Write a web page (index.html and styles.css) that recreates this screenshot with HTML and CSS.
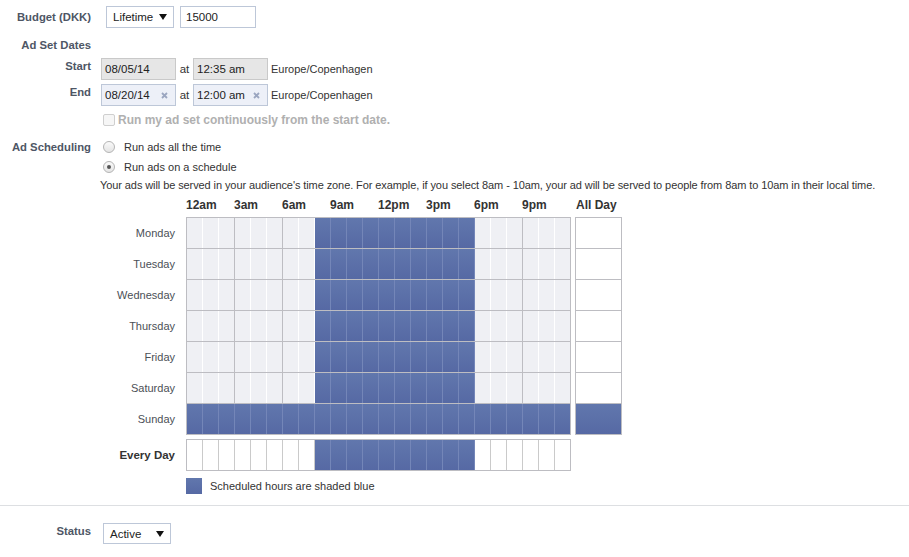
FILE: index.html
```html
<!DOCTYPE html>
<html lang="en">
<head>
    <meta charset="UTF-8">
    <title>Ad Set Budget &amp; Schedule</title>
    <link rel="stylesheet" href="styles.css">
</head>
<body>
    <div class="form">
        <div class="row budget">
            <div class="label">Budget (DKK)</div>
            <div class="field">
                <div class="select lifetime">Lifetime <span class="arrow"></span></div>
                <div class="input amount">15000</div>
            </div>
        </div>

        <div class="row heading">
            <div class="label">Ad Set Dates</div>
        </div>

        <div class="row dates start">
            <div class="label">Start</div>
            <div class="field">
                <div class="input date locked">08/05/14</div>
                <span class="at">at</span>
                <div class="input date locked">12:35 am</div>
                <span class="tz">Europe/Copenhagen</span>
            </div>
        </div>
        <div class="row dates end">
            <div class="label">End</div>
            <div class="field">
                <div class="input date editable">08/20/14
                    <svg class="clear" width="7" height="7" viewBox="0 0 7 7"><path d="M1 1L6 6M6 1L1 6" stroke="#9ba6c0" stroke-width="1.8"/></svg>
                </div>
                <span class="at">at</span>
                <div class="input date editable">12:00 am
                    <svg class="clear" width="7" height="7" viewBox="0 0 7 7"><path d="M1 1L6 6M6 1L1 6" stroke="#9ba6c0" stroke-width="1.8"/></svg>
                </div>
                <span class="tz">Europe/Copenhagen</span>
            </div>
        </div>

        <div class="row continuous">
            <div class="label"></div>
            <div class="field">
                <span class="checkbox"></span>
                <span class="disabled-text">Run my ad set continuously from the start date.</span>
            </div>
        </div>

        <div class="row scheduling">
            <div class="label">Ad Scheduling</div>
            <div class="field">
                <div class="option"><span class="radio"></span>Run ads all the time</div>
                <div class="option"><span class="radio checked"></span>Run ads on a schedule</div>
                <p class="note">Your ads will be served in your audience's time zone. For example, if you select 8am - 10am, your ad will be served to people from 8am to 10am in their local time.</p>

                <div class="schedule">
                    <div class="hour-head">
                        <span>12am</span><span>3am</span><span>6am</span><span>9am</span>
                        <span>12pm</span><span>3pm</span><span>6pm</span><span>9pm</span>
                        <span class="allday-head">All Day</span>
                    </div>
                    <div class="week">
                        <div class="sched-row"><div class="day">Monday</div><div class="hours" data-from="8" data-to="18"></div><div class="allday"></div></div>
                        <div class="sched-row"><div class="day">Tuesday</div><div class="hours" data-from="8" data-to="18"></div><div class="allday"></div></div>
                        <div class="sched-row"><div class="day">Wednesday</div><div class="hours" data-from="8" data-to="18"></div><div class="allday"></div></div>
                        <div class="sched-row"><div class="day">Thursday</div><div class="hours" data-from="8" data-to="18"></div><div class="allday"></div></div>
                        <div class="sched-row"><div class="day">Friday</div><div class="hours" data-from="8" data-to="18"></div><div class="allday"></div></div>
                        <div class="sched-row"><div class="day">Saturday</div><div class="hours" data-from="8" data-to="18"></div><div class="allday"></div></div>
                        <div class="sched-row last"><div class="day">Sunday</div><div class="hours" data-from="0" data-to="24"></div><div class="allday on"></div></div>
                    </div>
                    <div class="sched-row every">
                        <div class="day">Every Day</div>
                        <div class="hours" data-from="8" data-to="18"></div>
                    </div>
                    <div class="legend"><span class="swatch"></span>Scheduled hours are shaded blue</div>
                </div>
            </div>
        </div>

        <div class="divider"></div>

        <div class="row status">
            <div class="label">Status</div>
            <div class="field">
                <div class="select active">Active <span class="arrow"></span></div>
            </div>
        </div>
    </div>

    <script>
        // 生成每一行的 24 个小时格子
        document.querySelectorAll('.hours').forEach(function(h) {
            var from = parseInt(h.dataset.from, 10);
            var to = parseInt(h.dataset.to, 10);
            for (var i = 0; i < 24; i++) {
                var cell = document.createElement('div');
                var cls = 'cell';
                if (i % 3 === 2) cls += ' edge';
                if (i >= from && i < to) cls += ' on';
                cell.className = cls;
                h.appendChild(cell);
            }
        });
    </script>
</body>
</html>
```

FILE: styles.css
```css
body {
    margin: 0;
    font-family: 'Liberation Sans', Arial, sans-serif;
    font-size: 11px;
    color: #333;
    background: #fff;
}
.row {
    display: flex;
}
.label {
    width: 91px;
    flex-shrink: 0;
    text-align: right;
    font-weight: bold;
    font-size: 11.3px;
    color: #4e5665;
    line-height: 14px;
}
.field {
    margin-left: 9px;
    display: flex;
    align-items: center;
}

/* budget */
.budget {
    margin-top: 6px;
    align-items: center;
}
.select, .input {
    box-sizing: border-box;
    border: 1px solid #bdc7d8;
    background: #fff;
    display: flex;
    align-items: center;
    color: #222;
}
.select {
    position: relative;
    padding-left: 6px;
}
.arrow {
    position: absolute;
    right: 6px;
    top: 7px;
    width: 0;
    height: 0;
    border-left: 4px solid transparent;
    border-right: 4px solid transparent;
    border-top: 6px solid #111;
}
.lifetime {
    margin-left: 6px;
    width: 68px;
    height: 22px;
    font-size: 11.5px;
}
.amount {
    margin-left: 6px;
    width: 76px;
    height: 22px;
    padding-left: 5px;
    font-size: 11.5px;
}

/* dates */
.heading {
    margin-top: 10px;
}
.start {
    margin-top: 6px;
}
.end {
    margin-top: 4px;
}
.dates {
    align-items: flex-start;
}
.dates .label {
    padding-top: 1px;
}
.dates .field {
    margin-left: 10px;
}
.date {
    width: 75px;
    height: 22px;
    padding-left: 3px;
    font-size: 11.5px;
    position: relative;
}
.date.locked {
    background: #e6e6e6;
    border-color: #c9c9c9;
}
.date.editable {
    background: #edf0f8;
}
.clear {
    position: absolute;
    right: 7px;
    top: 7px;
}
.at {
    width: 17px;
    text-align: center;
    font-size: 11.5px;
}
.tz {
    margin-left: 3px;
    font-size: 11px;
}

/* continuous */
.continuous {
    margin-top: 6px;
    height: 16px;
    align-items: center;
}
.checkbox {
    display: inline-block;
    box-sizing: border-box;
    width: 12px;
    height: 12px;
    margin-left: 3px;
    border: 1px solid #cfcfcf;
    border-radius: 2px;
    background: #f6f6f6;
}
.disabled-text {
    margin-left: 3px;
    font-weight: bold;
    color: #b0b0b0;
    font-size: 12px;
}

/* scheduling */
.scheduling {
    margin-top: 9px;
    align-items: flex-start;
}
.scheduling .label {
    line-height: 20px;
}
.scheduling .field {
    flex-direction: column;
    align-items: flex-start;
}
.option {
    height: 20px;
    display: flex;
    align-items: center;
    margin-left: 3px;
}
.radio {
    box-sizing: border-box;
    width: 12px;
    height: 12px;
    border-radius: 50%;
    border: 1px solid #b4b4b4;
    background: linear-gradient(#fafafa, #e4e4e4);
    margin-right: 9px;
    position: relative;
}
.radio.checked::after {
    content: '';
    position: absolute;
    left: 3px;
    top: 3px;
    width: 4px;
    height: 4px;
    border-radius: 50%;
    background: #555;
}
.note {
    margin: 0;
    height: 16px;
    line-height: 16px;
    letter-spacing: -0.09px;
}

/* schedule grid */
.schedule {
    margin-top: 5px;
}
.hour-head {
    display: flex;
    height: 14px;
    line-height: 14px;
    padding-left: 86px;
    font-weight: bold;
    font-size: 12px;
    color: #333;
}
.hour-head span {
    width: 48px;
}
.hour-head .allday-head {
    margin-left: 6px;
}
.week {
    margin-top: 5px;
}
.sched-row {
    display: flex;
}
.day {
    width: 75px;
    padding-right: 11px;
    text-align: right;
    align-self: center;
    color: #4b4f56;
}
.hours {
    display: flex;
    height: 30px;
    border: 1px solid #bdbdc2;
    border-bottom: none;
}
.last .hours, .last .allday {
    border-bottom: 1px solid #bdbdc2;
}
.cell {
    width: 15px;
    background: #eff0f4;
    border-right: 1px solid #fff;
}
.cell.edge {
    border-right-color: #bdbdc2;
}
.cell:last-child {
    border-right: none;
}
.every .hours {
    border-bottom: 1px solid #bdbdc2;
}
.every .cell {
    background: #fff;
    border-right-color: #cacaca;
}
.cell.on, .every .cell.on {
    background: linear-gradient(#6177ad, #5669a4);
    border-right-color: #7486b8;
}
.allday {
    margin-left: 4px;
    width: 45px;
    height: 30px;
    border: 1px solid #bdbdc2;
    border-bottom: none;
    background: #fff;
}
.allday.on {
    background: linear-gradient(#6177ad, #5669a4);
}
.every {
    margin-top: 4px;
}
.every .day {
    font-weight: bold;
    font-size: 11.5px;
    color: #333;
}
.legend {
    margin-top: 7px;
    margin-left: 86px;
    display: flex;
    align-items: center;
    height: 16px;
}
.swatch {
    width: 16px;
    height: 16px;
    background: linear-gradient(#6177ad, #5669a4);
    margin-right: 8px;
}

/* status */
.divider {
    margin-top: 11px;
    height: 1px;
    background: #dddfe2;
}
.status {
    margin-top: 17px;
    align-items: flex-start;
}
.status .label {
    line-height: 16px;
}
.active {
    margin-left: 3px;
    width: 68px;
    height: 21px;
    font-size: 11.5px;
}
```
